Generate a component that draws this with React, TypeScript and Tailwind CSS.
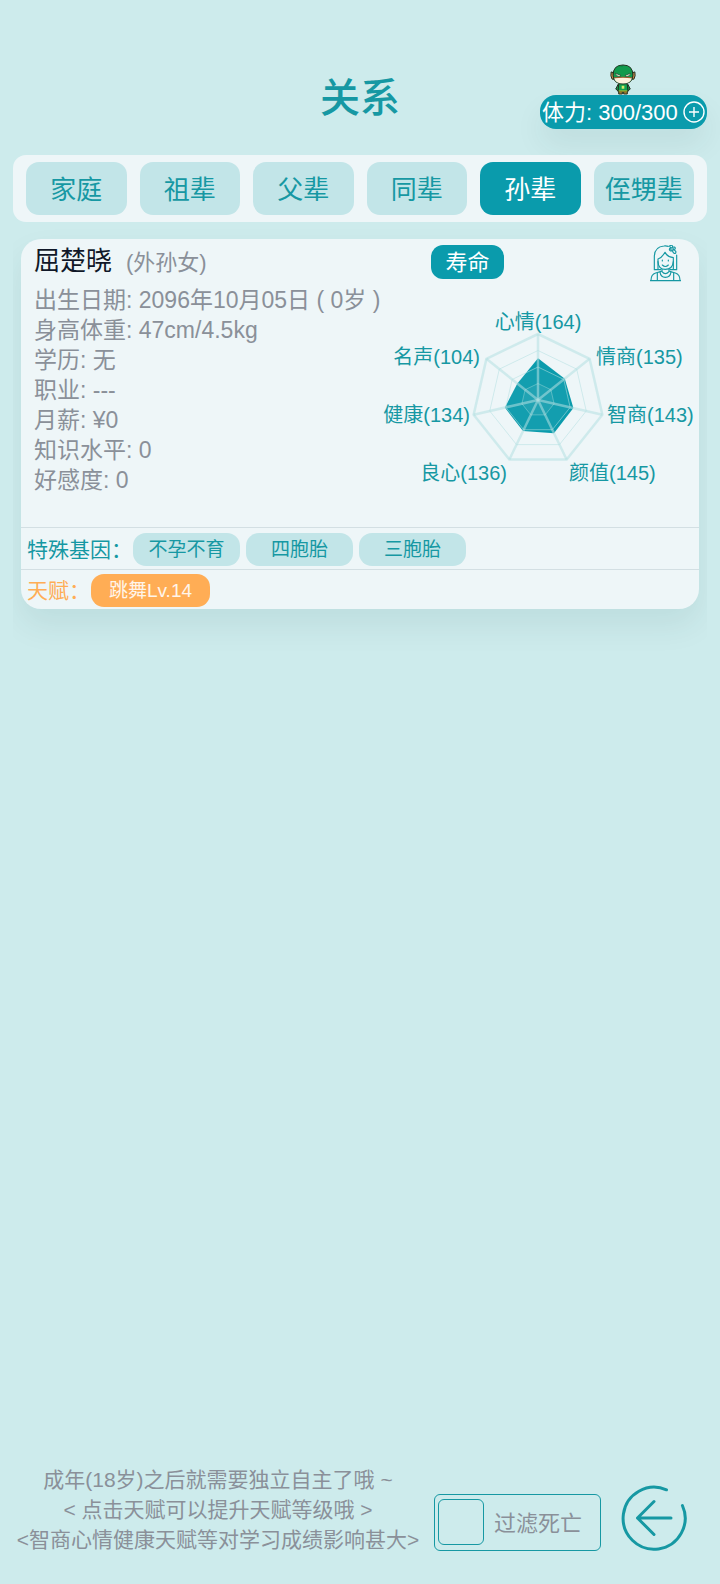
import { useState } from "react";

const TABS = ["家庭", "祖辈", "父辈", "同辈", "孙辈", "侄甥辈"];

const INFO = [
    "出生日期: 2096年10月05日 ( 0岁 )",
    "身高体重: 47cm/4.5kg",
    "学历: 无",
    "职业: ---",
    "月薪: ¥0",
    "知识水平: 0",
    "好感度: 0",
];

const GENES = ["不孕不育", "四胞胎", "三胞胎"];

type Stat = { label: string; value: number; x: number; y: number; anchor: "start" | "middle" | "end" };

const STATS: Stat[] = [
    { label: "心情", value: 164, x: 155, y: 44, anchor: "middle" },
    { label: "情商", value: 135, x: 213, y: 79, anchor: "start" },
    { label: "智商", value: 143, x: 224, y: 137, anchor: "start" },
    { label: "颜值", value: 145, x: 186, y: 195, anchor: "start" },
    { label: "良心", value: 136, x: 124, y: 195, anchor: "end" },
    { label: "健康", value: 134, x: 87, y: 137, anchor: "end" },
    { label: "名声", value: 104, x: 97, y: 79, anchor: "end" },
];

const MAX_STAT = 260;
const RADIUS = 66;
const CX = 155;
const CY = 115;

const point = (i: number, r: number) => {
    const a = (i * 2 * Math.PI) / STATS.length;
    return [CX + r * Math.sin(a), CY - r * Math.cos(a)];
};

const polygon = (radius: (i: number) => number) => STATS.map((_, i) => point(i, radius(i)).join(",")).join(" ");

const Radar = () => {
    return <svg viewBox="0 0 316 210" className="w-[316px] h-[210px] shrink-0" role="img" aria-label="属性">
        <polygon points={polygon((i) => (STATS[i].value / MAX_STAT) * RADIUS)} fill="#0a9bac" />
        <g fill="none" stroke="#b4e0e2" strokeOpacity="0.55">
            <polygon points={polygon(() => RADIUS / 4)} fill="#fff" fillOpacity="0.06" strokeOpacity="0.4" />
            <polygon points={polygon(() => RADIUS / 2)} fill="#fff" fillOpacity="0.04" />
            <polygon points={polygon(() => (RADIUS * 3) / 4)} />
            <polygon points={polygon(() => RADIUS)} strokeWidth="2.5" />
            {STATS.map((s, i) => {
                const [x, y] = point(i, RADIUS);
                return <line key={s.label} x1={CX} y1={CY} x2={x} y2={y} strokeWidth="2.5" />;
            })}
        </g>
        {STATS.map((s) => (
            <text key={s.label} x={s.x} y={s.y} textAnchor={s.anchor} className="text-[20px] fill-[#1698a3]">
                {`${s.label}(${s.value})`}
            </text>
        ))}
    </svg>
}

const Mascot = () => {
    return <svg viewBox="0 0 78 94" className="w-[26px] h-[31px]" aria-hidden="true">
        <g stroke="#22301f" strokeWidth="3" strokeLinejoin="round">
            <path d="M9 26 L3 24 Q0 36 6 46 L12 46 Z" fill="#c98a4b" />
            <path d="M69 26 L75 24 Q78 36 72 46 L66 46 Z" fill="#c98a4b" />
            <path d="M26 78 h11 v13 h-11 Z M41 78 h11 v13 h-11 Z" fill="#b98a35" />
            <path d="M24 62 L17 76 L25 82 L30 74 Z M54 62 L61 76 L53 82 L48 74 Z" fill="#15994f" />
            <path d="M26 60 h26 l2 24 h-30 Z" fill="#12a04f" />
            <path d="M9 34 Q9 3 39 3 Q69 3 69 34 Q69 60 39 60 Q9 60 9 34 Z" fill="#119a4d" />
        </g>
        <path d="M12 43 Q39 38 66 43 Q61 59 39 59 Q17 59 12 43 Z" fill="#fdf1dc" />
        <path d="M11 42 Q39 38 67 42" fill="none" stroke="#a2562c" strokeWidth="3" />
        <path d="M16 28 L33 35 L28 38 Q18 38 16 28 Z M62 28 L45 35 L50 38 Q60 38 62 28 Z" fill="#eaf6dd" stroke="#1d3b26" strokeWidth="2" />
        <path d="M22 8 Q30 4 38 8" fill="none" stroke="#0b7d3c" strokeWidth="2" />
        <path d="M35 66 h8 v9 h-8 Z" fill="#d7e86a" />
        <path d="M26 82 h26" stroke="#e5c62d" strokeWidth="3" />
    </svg>
}

const Girl = () => {
    return <svg viewBox="0 0 93 111" className="w-[31px] h-[37px]" fill="none" stroke="#1698a3" strokeWidth="3.5" strokeLinejoin="round" strokeLinecap="round" role="img" aria-label="女">
        <path d="M55 4 Q48 2 42 3 Q13 5 13 36 V74 H32" />
        <path d="M60 74 H80 V30" />
        <path d="M24 72 V42 Q36 38 45 22 Q52 36 70 38 V72" />
        <path d="M24 50 Q25 73 46 73 Q68 73 70 50" />
        <path d="M37 60 Q46 69 55 60" />
        <path d="M37 45 v3 M55 45 v3" />
        <path d="M36 73 V80 Q46 92 57 80 V73" />
        <path d="M3 106 Q3 88 17 84 L34 79 M90 106 Q90 88 76 84 L59 79" />
        <path d="M22 84 V106 M71 84 V106 M30 81 Q32 97 46 97 Q61 97 63 81" />
        <path d="M1 107 H92" />
        <circle cx="66" cy="12" r="4" />
        <path d="M62 8 Q56 2 62 1 Q68 0 68 7 Q75 4 76 10 Q76 14 70 14 Q80 18 77 24 Q72 29 67 17 Q60 20 58 14 Q58 9 62 9" />
    </svg>
}

const App = () => {
    const [tab, setTab] = useState("孙辈");
    const [hideDead, setHideDead] = useState(false);

    return <div className="min-h-screen flex flex-col bg-[#cdebec] text-[#8a9099] font-['Liberation_Sans','Noto_Sans_CJK_SC',sans-serif]">
        <header className="grid grid-cols-3 items-center pt-16 px-[13px]">
            <h1 className="col-start-2 pt-[2px] text-center text-[40px] leading-[48px] font-medium text-[#1698a3]">关系</h1>
            <div className="flex flex-col items-center justify-self-end">
                <Mascot />
                <button type="button" className="flex items-center justify-between w-[167px] h-[34px] px-[2px] rounded-2xl bg-[#0a9bac] text-white text-[22px] whitespace-nowrap shadow-[0_16px_30px_rgba(0,60,60,0.07)]">
                    <span>体力: 300/300</span>
                    <svg viewBox="0 0 22 22" className="w-[22px] h-[22px] shrink-0" fill="none" stroke="currentColor" strokeWidth="1.4" aria-hidden="true">
                        <circle cx="11" cy="11" r="10" />
                        <path d="M11 6 V16 M6 11 H16" />
                    </svg>
                </button>
            </div>
        </header>

        <nav className="relative grid grid-cols-6 gap-[13px] mt-[26px] mx-[13px] px-[13px] py-[7px] rounded-[13px] bg-[#eef6f8]">
            {TABS.map((t) => (
                <button
                    key={t}
                    type="button"
                    onClick={() => setTab(t)}
                    aria-pressed={t === tab}
                    className={`h-[53px] pt-[3px] rounded-[13px] text-[26px] whitespace-nowrap ${t === tab ? "bg-[#0a9bac] text-white" : "bg-[#c2e5e8] text-[#1698a3]"}`}
                >
                    {t}
                </button>
            ))}
        </nav>

        <main className="mx-[13px] px-2 pt-[17px] pb-16 overflow-hidden">
            <article className="rounded-[20px] bg-[#eef6f8] shadow-[0_16px_32px_rgba(0,60,60,0.08)]">
                <div className="flex pt-[6px] h-[45px] pl-[13px]">
                    <div className="flex-1 flex items-baseline gap-[14px]">
                        <h2 className="text-[26px] leading-8 text-[#101828]">屈楚晓</h2>
                        <span className="text-[22px] leading-8">(外孙女)</span>
                    </div>
                    <div className="w-[268px] flex items-start justify-between pr-[18px]">
                        <button type="button" className="w-[73px] h-[34px] rounded-xl bg-[#0a9bac] text-white text-[22px]">寿命</button>
                        <Girl />
                    </div>
                </div>
                <div className="flex pt-px pl-[13px] pb-8">
                    <ul className="w-0 grow text-[23px] leading-[30px] whitespace-nowrap">
                        {INFO.map((line) => <li key={line}>{line}</li>)}
                    </ul>
                    <Radar />
                </div>
                <div className="flex items-center h-[42px] pt-[2px] pl-[6px] border-t border-[#d3dfe3]">
                    <span className="mr-px text-[21px] text-[#1698a3]">特殊基因：</span>
                    <div className="flex gap-[6px]">
                        {GENES.map((g) => (
                            <span key={g} className="flex items-center justify-center w-[107px] h-[33px] pt-[2px] rounded-[13px] bg-[#c2e5e8] text-[#1698a3] text-[19px]">{g}</span>
                        ))}
                    </div>
                </div>
                <div className="flex items-center h-10 pt-[2px] pl-[6px] border-t border-[#d3dfe3]">
                    <span className="mr-px text-[21px] text-[#ffad55]">天赋：</span>
                    <button type="button" className="w-[119px] h-[33px] pt-px rounded-[13px] bg-[#ffad55] text-[#fff5ea] text-[19px]">跳舞Lv.14</button>
                </div>
            </article>
        </main>

        <footer className="mt-auto flex items-center px-[13px] pb-[29px]">
            <div className="w-[410px] shrink-0 text-[21px] leading-[30px] text-center whitespace-nowrap">
                <p>成年(18岁)之后就需要独立自主了哦 ~</p>
                <p>&lt; 点击天赋可以提升天赋等级哦 &gt;</p>
                <p>&lt;智商心情健康天赋等对学习成绩影响甚大&gt;</p>
            </div>
            <label className="flex items-center gap-[10px] w-[167px] h-[57px] mt-6 ml-auto pl-[3px] rounded-md border border-[#1698a3] text-[22px] whitespace-nowrap">
                <input
                    type="checkbox"
                    checked={hideDead}
                    onChange={(e) => setHideDead(e.target.checked)}
                    className="appearance-none w-[46px] h-[46px] rounded-md border border-[#1698a3] checked:bg-[#0a9bac]"
                />
                <span className="pt-[2px]">过滤死亡</span>
            </label>
            <button type="button" aria-label="返回" className="shrink-0 mt-4 mx-[20px]">
                <svg viewBox="0 0 66 66" className="w-[66px] h-[66px]" fill="none" stroke="#1698a3" strokeWidth="3" strokeLinecap="round" strokeLinejoin="round">
                    <path d="M45.5 4.8 A31 31 0 1 0 61.4 20.5" />
                    <path d="M50 33 H16.5 M33 16.5 L16.5 33 L33 49.5" />
                </svg>
            </button>
        </footer>
    </div>
}

export default App;
